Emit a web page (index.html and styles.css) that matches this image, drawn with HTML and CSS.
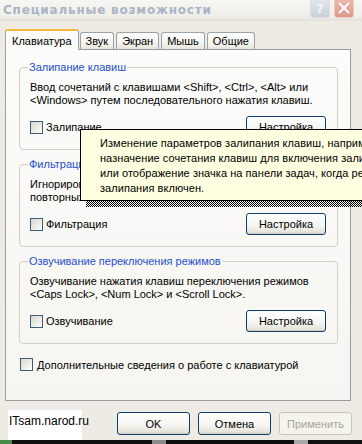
FILE: index.html
```html
<!DOCTYPE html>
<html lang="ru">
<head>
<meta charset="utf-8">
<title>Специальные возможности</title>
<link rel="stylesheet" href="styles.css">
</head>
<body>
<div class="window">
  <div class="titlebar">
    <span class="title">Специальные возможности</span>
    <div class="caption-buttons">
      <span class="cap-btn help">?</span>
      <span class="cap-btn close">
        <svg width="12" height="12" viewBox="0 0 12 12"><path d="M1.5 1.5 L10.5 10.5 M10.5 1.5 L1.5 10.5" stroke="#fff" stroke-width="2" stroke-linecap="round"/></svg>
      </span>
    </div>
  </div>
  <div class="tabs">
    <span class="tab active">Клавиатура</span>
    <span class="tab">Звук</span>
    <span class="tab">Экран</span>
    <span class="tab">Мышь</span>
    <span class="tab">Общие</span>
  </div>
  <div class="panel">
    <fieldset class="group">
      <legend>Залипание клавиш</legend>
      <p class="desc">Ввод сочетаний с клавишами &lt;Shift&gt;, &lt;Ctrl&gt;, &lt;Alt&gt; или<br>&lt;Windows&gt; путем последовательного нажатия клавиш.</p>
      <div class="row">
        <label class="check"><span class="box"></span>Залипание</label>
        <span class="btn">Настройка</span>
      </div>
    </fieldset>
    <fieldset class="group">
      <legend>Фильтрация ввода</legend>
      <p class="desc">Игнорирование кратких нажатий клавиш и замедление<br>повторных нажатий.</p>
      <div class="row">
        <label class="check"><span class="box"></span>Фильтрация</label>
        <span class="btn">Настройка</span>
      </div>
    </fieldset>
    <fieldset class="group">
      <legend>Озвучивание переключения режимов</legend>
      <p class="desc">Озвучивание нажатия клавиш переключения режимов<br>&lt;Caps Lock&gt;, &lt;Num Lock&gt; и &lt;Scroll Lock&gt;.</p>
      <div class="row">
        <label class="check"><span class="box"></span>Озвучивание</label>
        <span class="btn">Настройка</span>
      </div>
    </fieldset>
    <label class="check extra"><span class="box"></span>Дополнительные сведения о работе с клавиатурой</label>
  </div>
  <div class="footer">
    <div class="brand">ITsam.narod.ru</div>
    <div class="actions">
      <span class="btn wide">OK</span>
      <span class="btn wide">Отмена</span>
      <span class="btn wide disabled">Применить</span>
    </div>
  </div>
  <div class="taskbar">
    <span class="seg green"></span><span class="seg dark w1"></span><span class="seg light"></span><span class="seg dark w2"></span><span class="seg grey"></span><span class="seg dark w3"></span>
  </div>
  <div class="tooltip">
    Изменение параметров залипания клавиш, например<br>
    назначение сочетания клавиш для включения залипания<br>
    или отображение значка на панели задач, когда режим<br>
    залипания включен.
  </div>
</div>
</body>
</html>
```

FILE: styles.css
```css
* { box-sizing: border-box; }
html, body { margin: 0; padding: 0; }
body { width: 362px; height: 444px; overflow: hidden; background: #ECEAE1; }

.window {
  position: relative;
  width: 362px;
  height: 444px;
  overflow: hidden;
  background: #EDEBE3;
  font-family: "Liberation Sans", Arial, sans-serif;
  font-size: 11px;
  color: #000;
  display: flex;
  flex-direction: column;
}

.titlebar {
  height: 21px;
  flex: none;
  display: flex;
  justify-content: space-between;
  align-items: flex-start;
  padding: 0 8px 0 3px;
  background: linear-gradient(#F6F6F3, #EFEEE8 80%, #E2E0D8);
}
.title {
  font-family: "DejaVu Sans", sans-serif;
  font-weight: bold;
  font-size: 12px;
  letter-spacing: 0.8px;
  color: #A9B4C6;
  line-height: 20px;
}
.caption-buttons { display: flex; gap: 4px; margin-top: -2px; }
.cap-btn {
  width: 20px;
  height: 20px;
  border-radius: 3px;
  display: flex;
  align-items: center;
  justify-content: center;
}
.help {
  background: linear-gradient(#E4E7EE, #C9CFDB);
  border: 1px solid #D9DDE6;
  color: #F4F6FA;
  font-family: "DejaVu Sans", sans-serif;
  font-weight: bold;
  font-size: 13px;
}
.close {
  background: linear-gradient(#EDB8AE, #DD9888);
  border: 1px solid #F0C9C0;
}

.tabs {
  flex: none;
  display: flex;
  align-items: flex-end;
  height: 28px;
  padding-left: 5px;
  position: relative;
  z-index: 1;
}
.tab {
  height: 17px;
  padding: 0 5px;
  line-height: 16px;
  border: 1px solid #9AA3A5;
  border-bottom: none;
  border-radius: 3px 3px 0 0;
  background: linear-gradient(#FFFFFF, #F3F2EC 70%, #E6E4DB);
  margin-right: 2px;
}
.tab.active {
  height: 21px;
  margin-bottom: -1px;
  padding: 0 6px;
  line-height: 20px;
  border-top: 2px solid #F8B83A;
  background: #FBFBF8;
  margin-right: 0;
}
.tab.active + .tab { margin-left: 1px; }

.panel {
  flex: none;
  width: 346px;
  height: 352px;
  margin-left: 5px;
  border: 1px solid #939C9E;
  background: linear-gradient(#FCFCFB, #F6F5F1);
  padding: 11px 12px 0 13px;
  display: flex;
  flex-direction: column;
}

.group {
  margin: 0 0 8px;
  padding: 7px 11px 11px 10px;
  border: 1px solid #D2D0C2;
  border-radius: 4px;
  min-width: 0;
}
.group legend {
  color: #1F4ED0;
  padding: 0 1px;
  margin-left: -2px;
  line-height: 13px;
}
.desc {
  margin: 0;
  line-height: 13px;
  white-space: nowrap;
}
.row {
  margin-top: 9px;
  height: 22px;
  display: flex;
  align-items: center;
  justify-content: space-between;
}
.check {
  display: flex;
  align-items: center;
  gap: 3px;
}
.box {
  width: 13px;
  height: 13px;
  border: 1px solid #3D5C7A;
  background: linear-gradient(135deg, #D9D8D0, #F2F2EE 70%, #FFFFFF);
}
.extra { margin: 6px 0 0 1px; gap: 4px; }

.btn {
  width: 80px;
  height: 22px;
  display: flex;
  align-items: center;
  justify-content: center;
  border: 1px solid #0F3C73;
  border-radius: 3px;
  background: linear-gradient(#FFFFFF, #F4F4F0 60%, #E6E4DA 90%, #D6D2C5);
  box-shadow: inset 0 -1px 0 #D2CEC0;
}

.footer {
  flex: none;
  display: flex;
  align-items: flex-start;
  padding: 9px 0 0 8px;
  height: 39px;
}
.brand {
  width: 74px;
  height: 30px;
  background: #FFFFFF;
  font-size: 12px;
  line-height: 23px;
  padding-left: 1px;
  white-space: nowrap;
}
.actions {
  display: flex;
  gap: 8px;
  margin-left: 35px;
  margin-top: 2px;
}
.btn.wide { width: 73px; height: 23px; }
.btn.disabled {
  border-color: #C8C6B8;
  color: #ABA796;
  background: #F4F3EC;
  box-shadow: none;
}

.taskbar {
  flex: 1;
  display: flex;
  background: #0C0C0C;
}
.seg { height: 100%; }
.green { width: 12px; background: #4C8A4C; }
.dark.w1 { width: 140px; background: #101010; }
.light { width: 14px; background: #8A8A8A; }
.dark.w2 { width: 128px; background: #0E0E0E; }
.grey { width: 14px; background: #A8A8A8; }
.dark.w3 { flex: 1; background: #111; }

.tooltip {
  position: absolute;
  left: 80px;
  top: 129px;
  width: 300px;
  height: 72px;
  background: #FFFFE1;
  border: 1px solid #000;
  padding: 6px 0 0 19px;
  line-height: 15px;
  font-size: 11px;
  letter-spacing: 0.05px;
  white-space: nowrap;
}
.tooltip::after {
  content: "";
  position: absolute;
  left: 5px;
  right: -6px;
  bottom: -7px;
  height: 6px;
  background: repeating-conic-gradient(#000 0 25%, transparent 0 50%) 0 0 / 2px 2px;
}
```
